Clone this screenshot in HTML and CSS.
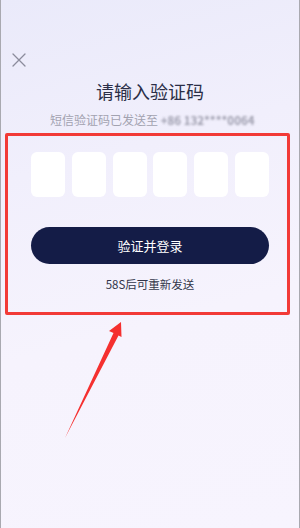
FILE: index.html
```html
<!DOCTYPE html>
<html lang="zh-CN">
<head>
<meta charset="utf-8">
<title>请输入验证码</title>
<link rel="stylesheet" href="styles.css">
</head>
<body>
<div class="page">
  <div class="topbar">
    <svg class="close" width="14" height="14" viewBox="0 0 14 14"><path d="M1 1L13 13M13 1L1 13" stroke="#8b8c9c" stroke-width="1.3" fill="none" stroke-linecap="round"/></svg>
  </div>
  <h1 class="title">请输入验证码</h1>
  <p class="subtitle">短信验证码已发送至 <span class="phone">+86 132****0064</span></p>
  <section class="verify">
    <div class="codes">
      <div class="cell"></div>
      <div class="cell"></div>
      <div class="cell"></div>
      <div class="cell"></div>
      <div class="cell"></div>
      <div class="cell"></div>
    </div>
    <button class="submit">验证并登录</button>
    <p class="resend">58S后可重新发送</p>
  </section>
  <svg class="arrow" width="300" height="528" viewBox="0 0 300 528"><polygon points="121,322 109,331 113.5,333 65,438 118.5,335.5 121.5,337" fill="#f5302f"/></svg>
</div>
</body>
</html>
```
FILE: styles.css
```css
html, body {
  margin: 0;
  padding: 0;
}
body {
  font-family: "Noto Sans CJK SC", "Noto Sans", sans-serif;
}
.page {
  position: relative;
  box-sizing: border-box;
  width: 300px;
  height: 528px;
  border-left: 1px solid #a9a9b0;
  border-right: 1px solid #a9a9b0;
  background: linear-gradient(165deg, #eaeafa 0%, #f1effc 30%, #f6f3fd 60%, #f7f4fe 100%);
  overflow: hidden;
}
.topbar {
  height: 67px;
  padding-left: 11px;
  box-sizing: border-box;
  padding-top: 53px;
}
.close {
  display: block;
}
.title {
  margin: 12px 0 0;
  font-size: 18px;
  line-height: 24px;
  font-weight: 400;
  color: #2b2e47;
  text-align: center;
}
.subtitle {
  margin: 9px 0 0;
  font-size: 12px;
  line-height: 16px;
  color: #a2a2b0;
  padding-left: 49px;
  white-space: nowrap;
}
.phone {
  display: inline-block;
  filter: blur(1.3px);
  color: #9c9cac;
  font-size: 11.5px;
  font-weight: 700;
  letter-spacing: 0;
}
.verify {
  box-sizing: border-box;
  margin: 5px 0 0 4px;
  width: 285px;
  border: 3px solid #f23a37;
  border-radius: 2px;
  padding: 16px 18px 20px 23px;
}
.codes {
  display: flex;
  justify-content: space-between;
  width: 238px;
}
.cell {
  width: 34px;
  height: 45px;
  background: #ffffff;
  border-radius: 6px;
}
.submit {
  display: block;
  margin-top: 30px;
  width: 238px;
  height: 37px;
  border: none;
  border-radius: 19px;
  background: #141c47;
  color: #ffffff;
  font-family: inherit;
  font-size: 13px;
  padding: 0;
}
.resend {
  margin: 12px 0 0;
  width: 238px;
  text-align: center;
  font-size: 11.5px;
  line-height: 16px;
  color: #33364a;
}
.arrow {
  position: absolute;
  left: -1px;
  top: 0;
  pointer-events: none;
}
```
